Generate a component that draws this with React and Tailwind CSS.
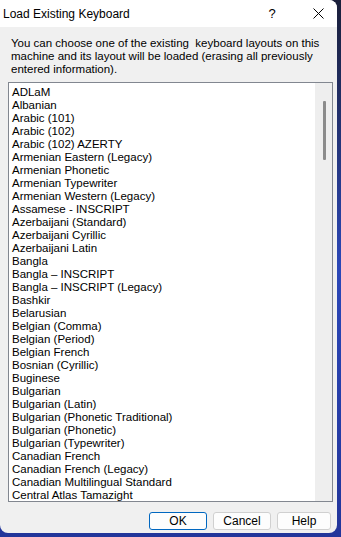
import React from "react";

const items = [
  "ADLaM",
  "Albanian",
  "Arabic (101)",
  "Arabic (102)",
  "Arabic (102) AZERTY",
  "Armenian Eastern (Legacy)",
  "Armenian Phonetic",
  "Armenian Typewriter",
  "Armenian Western (Legacy)",
  "Assamese - INSCRIPT",
  "Azerbaijani (Standard)",
  "Azerbaijani Cyrillic",
  "Azerbaijani Latin",
  "Bangla",
  "Bangla – INSCRIPT",
  "Bangla – INSCRIPT (Legacy)",
  "Bashkir",
  "Belarusian",
  "Belgian (Comma)",
  "Belgian (Period)",
  "Belgian French",
  "Bosnian (Cyrillic)",
  "Buginese",
  "Bulgarian",
  "Bulgarian (Latin)",
  "Bulgarian (Phonetic Traditional)",
  "Bulgarian (Phonetic)",
  "Bulgarian (Typewriter)",
  "Canadian French",
  "Canadian French (Legacy)",
  "Canadian Multilingual Standard",
  "Central Atlas Tamazight",
];

export default function App() {
  return (
    <div
      className="w-[341px] h-[537px] overflow-hidden bg-gradient-to-b from-[#1b1f3a] via-[#2b47b8] to-[#22359a]"
      style={{ fontFamily: '"Liberation Sans", Arial, sans-serif' }}
    >
      <div className="w-[337px] h-[533px] bg-[#f0f0f0] rounded-tr-[8px] rounded-b-[8px] overflow-hidden flex flex-col text-[11.5px] text-black">
        {/* title bar */}
        <div className="h-[27px] bg-white flex items-center shrink-0 text-[12px]">
          <div className="pl-[3px] flex-1 leading-[14px] pt-[1px]">Load Existing Keyboard</div>
          <div className="w-[20px] text-center mr-[29px] text-[13px]">?</div>
          <div className="w-[14px] mr-[12px] flex items-center justify-center">
            <svg width="11" height="11" viewBox="0 0 11 11">
              <path d="M0.5 0.5 L10.5 10.5 M10.5 0.5 L0.5 10.5" stroke="#000" strokeWidth="1" />
            </svg>
          </div>
        </div>
        {/* description */}
        <div className="pt-[10px] pl-[11px] pr-[4px] leading-[13px] whitespace-pre h-[47px] shrink-0">
          {"You can choose one of the existing  keyboard layouts on this\nmachine and its layout will be loaded (erasing all previously\nentered information)."}
        </div>
        {/* list box */}
        <div className="mt-[8px] ml-[8px] w-[325px] h-[420px] border border-[#828790] bg-white flex shrink-0">
          <div className="flex-1 pt-[3px] pl-[3px]">
            {items.map((it) => (
              <div key={it} className="leading-[13px] h-[13px] whitespace-nowrap">
                {it}
              </div>
            ))}
          </div>
          <div className="w-[17px] h-full bg-[#eeeeee] flex justify-center pt-[18px]">
            <div className="w-[3px] h-[59px] bg-[#8b8b8b] rounded-[1px] ml-[1px]"></div>
          </div>
        </div>
        {/* buttons */}
        <div className="flex justify-end gap-[6px] pr-[6px] mt-[10px]">
          <button className="w-[58px] h-[18px] border border-[#0067c0] rounded-[3px] bg-[#fdfdfd] text-[12px] leading-[16px]">
            OK
          </button>
          <button className="w-[58px] h-[18px] border border-[#d0d0d0] rounded-[3px] bg-[#fdfdfd] text-[12px] leading-[16px]">
            Cancel
          </button>
          <button className="w-[54px] h-[18px] border border-[#d0d0d0] rounded-[3px] bg-[#fdfdfd] text-[12px] leading-[16px]">
            Help
          </button>
        </div>
      </div>
    </div>
  );
}
